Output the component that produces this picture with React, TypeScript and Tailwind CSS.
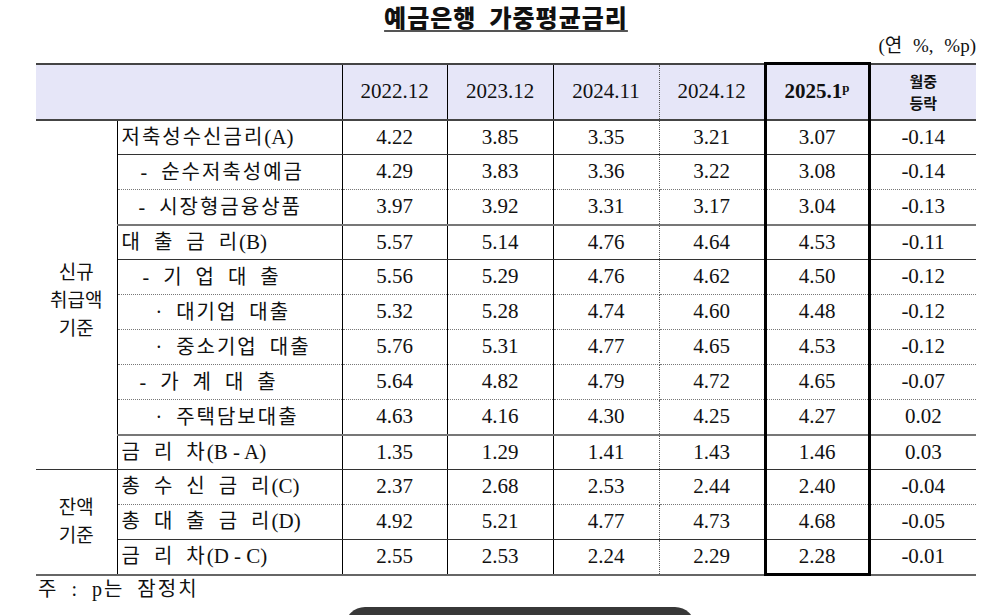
import React from "react";

// 예금은행 가중평균금리 표. 숫자는 Liberation Serif, 한글은 Noto Sans CJK KR로 떨어진다.
type Edge = "solid" | "dotted" | "thick" | "last";

type Row = {
  label: string;
  pad: string;
  edge: Edge;
  v: string[];
};

const rowsNew: Row[] = [
  { label: "저축성수신금리(A)", pad: "pl-[4px]", edge: "solid", v: ["4.22", "3.85", "3.35", "3.21", "3.07", "-0.14"] },
  { label: "- 순수저축성예금", pad: "pl-[23px]", edge: "dotted", v: ["4.29", "3.83", "3.36", "3.22", "3.08", "-0.14"] },
  { label: "- 시장형금융상품", pad: "pl-[21px]", edge: "thick", v: ["3.97", "3.92", "3.31", "3.17", "3.04", "-0.13"] },
  { label: "대 출 금 리(B)", pad: "pl-[4px]", edge: "solid", v: ["5.57", "5.14", "4.76", "4.64", "4.53", "-0.11"] },
  { label: "- 기 업 대 출", pad: "pl-[25px]", edge: "dotted", v: ["5.56", "5.29", "4.76", "4.62", "4.50", "-0.12"] },
  { label: "· 대기업 대출", pad: "pl-[38px]", edge: "dotted", v: ["5.32", "5.28", "4.74", "4.60", "4.48", "-0.12"] },
  { label: "· 중소기업 대출", pad: "pl-[38px]", edge: "dotted", v: ["5.76", "5.31", "4.77", "4.65", "4.53", "-0.12"] },
  { label: "- 가 계 대 출", pad: "pl-[22px]", edge: "dotted", v: ["5.64", "4.82", "4.79", "4.72", "4.65", "-0.07"] },
  { label: "· 주택담보대출", pad: "pl-[38px]", edge: "thick", v: ["4.63", "4.16", "4.30", "4.25", "4.27", "0.02"] },
  { label: "금 리 차(B - A)", pad: "pl-[4px]", edge: "solid", v: ["1.35", "1.29", "1.41", "1.43", "1.46", "0.03"] },
];

const rowsBal: Row[] = [
  { label: "총 수 신 금 리(C)", pad: "pl-[4px]", edge: "dotted", v: ["2.37", "2.68", "2.53", "2.44", "2.40", "-0.04"] },
  { label: "총 대 출 금 리(D)", pad: "pl-[4px]", edge: "solid", v: ["4.92", "5.21", "4.77", "4.73", "4.68", "-0.05"] },
  { label: "금 리 차(D - C)", pad: "pl-[4px]", edge: "last", v: ["2.55", "2.53", "2.24", "2.29", "2.28", "-0.01"] },
];

const bottom: Record<Edge, string> = {
  solid: "border-b border-b-[#333]",
  dotted: "[border-bottom:1px_dotted_#777]",
  thick: "border-b-2 border-b-[#777]",
  last: "border-b-2 border-b-[#666]",
};

// 값 열의 세로선: 2024.11 과 2024.12 사이만 점선
const colRight = [
  "border-r border-r-black",
  "border-r border-r-black",
  "[border-right:1px_dotted_#555]",
  "",
  "border-x-[3px] border-x-black",
  "",
];

function Label({ text }: { text: string }) {
  // 한글 부분만 자간을 벌리고 괄호 부분은 그대로
  const at = text.indexOf("(");
  const kr = at < 0 ? text : text.slice(0, at);
  const tail = at < 0 ? "" : text.slice(at);
  return (
    <>
      <span className="tracking-[2px] [word-spacing:5px]">{kr}</span>
      {tail && <span className="text-[21px]">{tail}</span>}
    </>
  );
}

function DataRow({ row, last, cat }: { row: Row; last?: boolean; cat?: React.ReactNode }) {
  const b = bottom[row.edge];
  return (
    <tr className="h-[35px]">
      {cat}
      <td className={`${b} border-r border-r-black ${row.pad} whitespace-pre text-[20px]`}>
        <Label text={row.label} />
      </td>
      {row.v.map((x, i) => (
        <td
          key={i}
          className={`${b} ${colRight[i]} ${i === 4 && last ? "border-b-[3px] border-b-black" : ""} text-center`}
        >
          {x}
        </td>
      ))}
    </tr>
  );
}

export default function App() {
  return (
    <div className="relative h-[615px] w-[1000px] overflow-hidden bg-white pl-[36px] font-['Liberation_Serif','Noto_Sans_CJK_KR',serif] text-[21px] text-[#111]">
      <div className="flex h-[31px] w-[940px] items-end justify-center">
        <h1 className="whitespace-pre font-['Noto_Sans_CJK_KR',sans-serif] text-[24px] font-black leading-[28px] tracking-[1px] underline decoration-[#555] decoration-2 underline-offset-[3px]">
          예금은행  가중평균금리
        </h1>
      </div>
      <div className="h-[31px] w-[940px] text-right text-[19px] leading-[30px] [word-spacing:6px]">
        (연 %, %p)
      </div>

      <table className="w-[940px] table-fixed border-collapse">
        <colgroup>
          <col className="w-[81px]" />
          <col className="w-[225px]" />
          <col className="w-[105px]" />
          <col className="w-[106px]" />
          <col className="w-[106px]" />
          <col className="w-[106px]" />
          <col className="w-[104px]" />
          <col className="w-[107px]" />
        </colgroup>
        <thead>
          <tr className="h-[56px] bg-[#e6e6f8]">
            <th colSpan={2} className="border-y-2 border-y-[#444] border-r border-r-black" />
            <th className="border-y-2 border-y-[#444] border-r border-r-black font-normal">2022.12</th>
            <th className="border-y-2 border-y-[#444] border-r border-r-black font-normal">2023.12</th>
            <th className="border-y-2 border-y-[#444] [border-right:1px_dotted_#555] font-normal">2024.11</th>
            <th className="border-y-2 border-y-[#444] font-normal">2024.12</th>
            <th className="border-x-[3px] border-t-[3px] border-b-2 border-x-black border-t-black border-b-[#444] font-bold">
              2025.1<sup className="text-[13px] font-bold">p</sup>
            </th>
            <th className="border-y-2 border-y-[#444] font-['Noto_Sans_CJK_KR',sans-serif] text-[15px] font-bold leading-[22px]">
              월중
              <br />
              등락
            </th>
          </tr>
        </thead>
        <tbody>
          {rowsNew.map((r, i) => (
            <DataRow
              key={r.label}
              row={r}
              cat={
                i === 0 ? (
                  <td
                    rowSpan={rowsNew.length}
                    className="border-b border-b-[#333] border-r border-r-black pt-[12px] text-center text-[19px] leading-[28px]"
                  >
                    신규
                    <br />
                    취급액
                    <br />
                    기준
                  </td>
                ) : undefined
              }
            />
          ))}
          {rowsBal.map((r, i) => (
            <DataRow
              key={r.label}
              row={r}
              last={i === rowsBal.length - 1}
              cat={
                i === 0 ? (
                  <td
                    rowSpan={rowsBal.length}
                    className="border-b-2 border-b-[#666] border-r border-r-black text-center text-[19px] leading-[28px]"
                  >
                    잔액
                    <br />
                    기준
                  </td>
                ) : undefined
              }
            />
          ))}
        </tbody>
      </table>

      <p className="pl-[2px] text-[20px] leading-[26px] tracking-[2px] [word-spacing:6px]">주 : p는 잠정치</p>

      {/* 아래쪽에 걸쳐 있는 어두운 알약 모양 */}
      <div className="absolute left-[345px] top-[607px] h-[40px] w-[350px] rounded-[20px] bg-[#383838]" />
    </div>
  );
}
